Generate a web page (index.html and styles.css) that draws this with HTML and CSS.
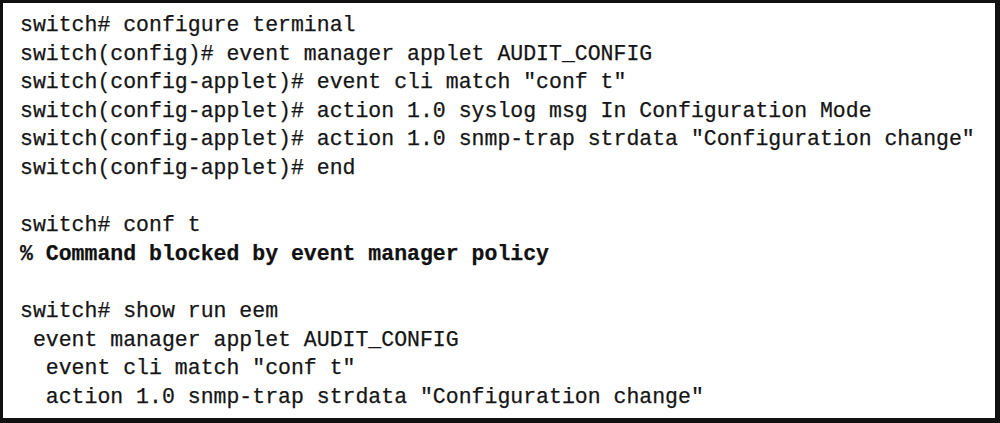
FILE: index.html
```html
<!DOCTYPE html>
<html>
<head>
<meta charset="utf-8">
<link rel="stylesheet" href="styles.css">
</head>
<body>
<div class="frame">
<pre class="cli">switch# configure terminal
switch(config)# event manager applet AUDIT_CONFIG
switch(config-applet)# event cli match "conf t"
switch(config-applet)# action 1.0 syslog msg In Configuration Mode
switch(config-applet)# action 1.0 snmp-trap strdata "Configuration change"
switch(config-applet)# end

switch# conf t
<b class="bold">% Command blocked by event manager policy</b>

switch# show run eem
 event manager applet AUDIT_CONFIG
  event cli match "conf t"
  action 1.0 snmp-trap strdata "Configuration change"</pre>
</div>
</body>
</html>
```

FILE: styles.css
```css
html, body {
  margin: 0;
  padding: 0;
  background: #ffffff;
}
.frame {
  box-sizing: border-box;
  width: 1000px;
  height: 423px;
  border-style: solid;
  border-color: #111111;
  border-width: 3px 5px 5px 3px;
  padding: 8px 0 0 17px;
  background: #ffffff;
}
.cli {
  margin: 0;
  font-family: "Liberation Mono", "DejaVu Sans Mono", monospace;
  font-size: 21.5px;
  line-height: 28.6px;
  color: #151515;
  white-space: pre;
  -webkit-text-stroke: 0.25px #151515;
}
.bold {
  font-weight: bold;
  color: #111111;
}
```
